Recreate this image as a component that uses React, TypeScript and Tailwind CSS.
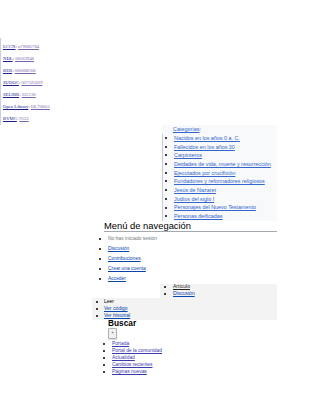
const authority = [
  ['LCCN', 'n79085784'],
  ['NDL', '00563948'],
  ['BER', '000008166'],
  ['SUDOC', '027325629'],
  ['SELIBR', '222130'],
  ['Open Library', 'OL7000A'],
  ['BVMC', '9123'],
];

const categories = [
  'Nacidos en los años 0 a. C.',
  'Fallecidos en los años 30',
  'Carpinteros',
  'Deidades de vida, muerte y resurrección',
  'Ejecutados por crucifixión',
  'Fundadores y reformadores religiosos',
  'Jesús de Nazaret',
  'Judíos del siglo I',
  'Personajes del Nuevo Testamento',
  'Personas deificadas',
];

const navigation = ['Portada', 'Portal de la comunidad', 'Actualidad', 'Cambios recientes', 'Páginas nuevas'];

function Dot() {
  return <span className="w-[2px] h-[2px] shrink-0 rounded-full bg-black" />;
}

export default function App() {
  return (
    <div className="w-[320px] h-[414px] overflow-hidden bg-white text-[#202122] font-['Liberation_Sans',Arial,sans-serif]">
      {/* authority control */}
      <div className="pt-[38px]">
        <div className="h-[87px] border-l border-[#c8ccf0] pl-[2px] pt-[5px] flex flex-col gap-[5px] font-['Liberation_Serif','Times_New_Roman',serif] text-[4.7px] leading-[7px]">
          {authority.map(([label, value]) => (
            <div key={label}>
              <a className="text-[#1d1d8f] underline">{label}</a>: <a className="text-[#7a63a8] underline">{value}</a>
            </div>
          ))}
        </div>
      </div>

      {/* categories */}
      <div className="ml-[162px] w-[115px] bg-[#f8f9fa] text-[5.4px]">
        <div className="pl-[11px] leading-[8.7px]">
          <a className="text-[#3366cc] underline">Categorías</a>:
        </div>
        <ul className="border-l border-[#c8ccd1]">
          {categories.map((c) => (
            <li key={c} className="h-[8.7px] flex items-center pl-[2px] gap-[7px]">
              <Dot />
              <a className="text-[#3366cc] underline whitespace-nowrap">{c}</a>
            </li>
          ))}
        </ul>
      </div>

      {/* navigation menu */}
      <h2 className="ml-[104px] w-[173px] text-[9.4px] leading-[10px] font-normal text-black border-b border-[#a2a9b1]">
        Menú de navegación
      </h2>

      <ul className="ml-[99px] pt-[2px] text-[4.9px]">
        <li className="h-[10px] flex items-center gap-[7px]">
          <Dot />
          <span className="text-[#72777d]">No has iniciado sesión</span>
        </li>
        {['Discusión', 'Contribuciones', 'Crear una cuenta', 'Acceder'].map((t) => (
          <li key={t} className="h-[10px] flex items-center gap-[7px]">
            <Dot />
            <a className="text-[#0645ad] underline">{t}</a>
          </li>
        ))}
      </ul>

      <ul className="ml-[160px] w-[117px] bg-[#f3f3f3] text-[5px]">
        <li className="h-[7px] flex items-center pl-[4px] gap-[7px]">
          <Dot />
          <a className="text-[#222] underline">Artículo</a>
        </li>
        <li className="h-[7px] flex items-center pl-[4px] gap-[7px]">
          <Dot />
          <a className="text-[#0645ad] underline">Discusión</a>
        </li>
      </ul>

      <ul className="ml-[92px] w-[185px] bg-[#f3f3f3] pt-[1px] text-[5px]">
        <li className="h-[7px] flex items-center pl-[4px] gap-[6px]">
          <Dot />
          <span className="text-black">Leer</span>
        </li>
        <li className="h-[7px] flex items-center pl-[4px] gap-[6px]">
          <Dot />
          <a className="text-[#0645ad] underline">Ver código</a>
        </li>
        <li className="h-[7px] flex items-center pl-[4px] gap-[6px]">
          <Dot />
          <a className="text-[#0645ad] underline">Ver historial</a>
        </li>
      </ul>

      {/* search */}
      <h3 className="ml-[108px] text-[8.3px] leading-[7px] font-bold text-black">Buscar</h3>
      <button className="ml-[108px] mt-[1px] w-[9px] h-[11px] flex items-center justify-center bg-[#f1f1f1] border border-[#b0b0b0] rounded-[1px] shadow-[0_1px_1px_rgba(0,0,0,0.15)] text-[4px] leading-none text-[#333]">
        »
      </button>

      <ul className="ml-[103px] pt-[2px] text-[4.9px]">
        {navigation.map((t) => (
          <li key={t} className="h-[7px] flex items-center gap-[7px]">
            <Dot />
            <a className="text-[#3b3bb0] underline">{t}</a>
          </li>
        ))}
      </ul>
    </div>
  );
}
